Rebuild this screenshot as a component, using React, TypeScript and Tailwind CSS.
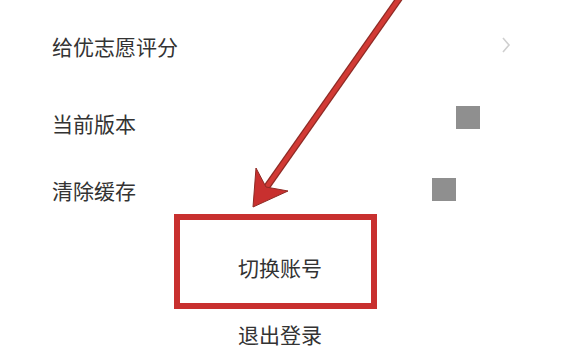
const font = { fontFamily: '"Noto Sans CJK SC", "Noto Sans", sans-serif' };

const Row = ({ label, right, className }: { label: string; right?: React.ReactNode; className: string }) => (
  <div className={`flex items-center pl-[52px] ${className}`}>
    <span className="text-[21px] leading-none text-[#333333]">{label}</span>
    {right}
  </div>
);

const Square = ({ cls }: { cls: string }) => <div className={`w-[24px] h-[23px] bg-[#8f8f8f] ${cls}`} />;

const App = () => {
  return (
    <div className="relative w-[576px] h-[363px] bg-white overflow-hidden" style={font}>
      {/* settings rows */}
      <Row
        label="给优志愿评分"
        className="h-[92px]"
        right={
          <svg className="ml-[323px] mb-[2px]" width="10" height="16" viewBox="0 0 10 16">
            <polyline points="2,1 8,8 2,15" fill="none" stroke="#cfcfcf" strokeWidth="1.6" />
          </svg>
        }
      />
      <Row label="当前版本" className="h-[62px]" right={<Square cls="ml-[320px] mb-[12px]" />} />
      <Row label="清除缓存" className="h-[60px] pt-[12px]" right={<Square cls="ml-[296px] mb-[2px]" />} />

      {/* switch account, annotated */}
      <div className="ml-[174px] w-[203px] h-[95px] border-[6px] border-[#c8302f] flex items-center pl-[58px] pt-[11px]">
        <span className="text-[21px] leading-none text-[#333333]">切换账号</span>
      </div>
      <div className="h-[50px] flex items-center pl-[238px]">
        <span className="text-[21px] leading-none text-[#333333]">退出登录</span>
      </div>

      {/* arrow annotation */}
      <svg className="absolute inset-0 pointer-events-none" width="576" height="363" viewBox="0 0 576 363">
        <line x1="401" y1="-4" x2="266" y2="188" stroke="#8e2a24" strokeWidth="7" />
        <line x1="401" y1="-4" x2="266" y2="188" stroke="#d23a35" strokeWidth="4.5" />
        <polygon points="253,207 256,168 266,187 288,191" fill="#c8302f" stroke="#8e2a24" strokeWidth="1" />
      </svg>
    </div>
  );
};

export default App;
